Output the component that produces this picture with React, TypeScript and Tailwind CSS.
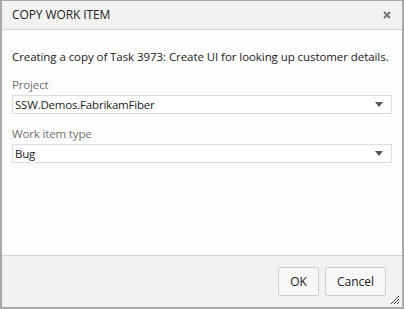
const font = { fontFamily: '"Open Sans", "Noto Sans", sans-serif' };

const Field = ({ label, value }: { label: string; value: string }) => (
    <div className="flex flex-col">
        <label className="text-[11.5px] leading-[16px] tracking-[-0.15px] text-[#707070] mb-[2px]">{label}</label>
        <div className="h-[19px] border border-[#dcdcdc] bg-white flex items-center justify-between pl-[2px] pr-[8px]">
            <span className="text-[11.5px] leading-[16px] tracking-[-0.2px] text-[#222]">{value}</span>
            <svg width="8" height="5" viewBox="0 0 8 5"><polygon points="0,0 8,0 4,5" fill="#555" /></svg>
        </div>
    </div>
);

const App = () => {
    return (
        <div className="w-[404px] h-[309px] bg-white" style={font}>
            <div className="w-full h-full flex flex-col border-l-2 border-r-2 border-t border-b-2 border-[#a8a8a8]">
                {/* header */}
                <div className="h-[29px] shrink-0 bg-[#f2f2f2] border-b border-[#d6d6d6] flex items-center justify-between pl-[10px] pr-[11px]">
                    <h1 className="text-[12px] tracking-[-0.1px] text-[#222]">COPY WORK ITEM</h1>
                    <svg width="8" height="8" viewBox="0 0 8 8">
                        <path d="M1 1 L7 7 M7 1 L1 7" stroke="#777" strokeWidth="2" />
                    </svg>
                </div>
                {/* body */}
                <div className="flex-1 bg-[#fdfdfd] px-[10px] pt-[19px] flex flex-col">
                    <p className="text-[11.5px] leading-[16px] tracking-[-0.07px] text-[#222] mb-[12px] whitespace-nowrap">
                        Creating a copy of Task 3973: Create UI for looking up customer details.
                    </p>
                    <Field label="Project" value="SSW.Demos.FabrikamFiber" />
                    <div className="h-[12px]" />
                    <Field label="Work item type" value="Bug" />
                </div>
                {/* footer */}
                <div className="relative h-[52px] shrink-0 bg-[#f2f2f2] border-t border-[#d6d6d6] flex items-center justify-end gap-[6px] pr-[16px]">
                    <button className="h-[29px] w-[41px] border border-[#cfcfcf] bg-[#f7f7f7] rounded-[2px] text-[12px] text-[#222]">OK</button>
                    <button className="h-[29px] w-[61px] border border-[#cfcfcf] bg-[#f7f7f7] rounded-[2px] text-[12px] text-[#222]">Cancel</button>
                    <svg className="absolute right-[2px] bottom-[2px]" width="10" height="10" viewBox="0 0 10 10">
                        <path d="M1 9 L9 1 M4 9 L9 4 M7 9 L9 7" stroke="#444" strokeWidth="1" />
                    </svg>
                </div>
            </div>
        </div>
    );
};

export default App;
